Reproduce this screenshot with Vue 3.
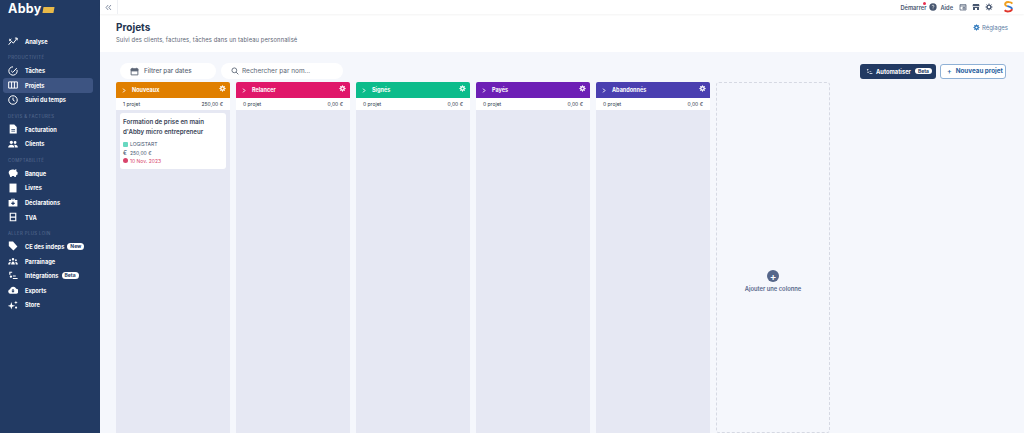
<script setup>
const groups = [
  { label: '', items: [{ t: 'Analyse', i: 'chart' }] },
  { label: 'PRODUCTIVITÉ', items: [{ t: 'Tâches', i: 'check' }, { t: 'Projets', i: 'board', active: true }, { t: 'Suivi du temps', i: 'clock' }] },
  { label: 'DEVIS & FACTURES', items: [{ t: 'Facturation', i: 'doc' }, { t: 'Clients', i: 'people' }] },
  { label: 'COMPTABILITÉ', items: [{ t: 'Banque', i: 'piggy' }, { t: 'Livres', i: 'book' }, { t: 'Déclarations', i: 'case' }, { t: 'TVA', i: 'tva' }] },
  { label: 'ALLER PLUS LOIN', items: [{ t: 'CE des indeps', i: 'tag', badge: 'New' }, { t: 'Parrainage', i: 'group' }, { t: 'Intégrations', i: 'plug', badge: 'Beta' }, { t: 'Exports', i: 'cloud' }, { t: 'Store', i: 'spark' }] }
]
const icons = {
  chart: 'M.8 10.500 4 6.500l2.500 2L11 2.500M8.300 2.500H11V5.200M1.300 3.500 4 6M4 3.500 1.300 6',
  check: 'M6 1a5 5 0 1 0 4.800 3.600M3.800 5.800 5.700 7.700 10.500 2.500',
  board: 'M.8 2.300h10.400v7.400H.8zM4.300 2.300v7.400M7.700 2.300v7.400',
  clock: 'M6 .9a5.100 5.100 0 1 0 0 10.200A5.100 5.100 0 0 0 6 .9zM6 3.200V6l2 1.300'
}
const filled = {
  doc: 'M2 .5H7.500L10.500 3.500V11.500H2zM4 6h4.500V7H4zM4 8h4.500V9H4z',
  people: 'M4 2a2 2 0 1 1 0 4 2 2 0 0 1 0-4zM8.500 2.500a1.700 1.700 0 1 1 0 3.400 1.700 1.700 0 0 1 0-3.400zM.2 10.300c0-2.300 1.600-3.500 3.800-3.500s3.800 1.200 3.800 3.500zM8.500 10.300c0-1.300-.3-2.300-1-3.200 2.500-.4 4.300.8 4.300 3.200z',
  piggy: 'M.8 5.500C.8 3 3.300 1.800 5.500 1.800c1 0 1.600.2 2.200.5L10 1.300v2.500l1.500 1.300v2.700L10 8.500 9.300 10.800H7.500V9.500h-3v1.300H2.700L2 8.500C1.200 7.700.8 6.500.8 5.500z',
  book: 'M1.800.7h8.400v10.600H1.800z',
  case: 'M.7 3.700h3.200V2h4.200v1.700h3.200v7.600H.7zM5 3v.7h2V3zM5.300 5.500h1.400v1.400h1.400v1.400H6.700v1.400H5.300V8.300H3.900V6.900h1.400z',
  tag: 'M1 .7H6l5.300 5.800L6.500 11.500 1 6z',
  group: 'M6 2.500a1.500 1.500 0 1 1 0 3 1.500 1.500 0 0 1 0-3zM2.500 4a1.100 1.100 0 1 1 0 2.200 1.100 1.100 0 0 1 0-2.200zM9.500 4a1.100 1.100 0 1 1 0 2.200 1.100 1.100 0 0 1 0-2.200zM3.800 10.300c0-2.200 1-3.800 2.200-3.800S8.200 8.100 8.200 10.300zM.2 10.300c0-1.700.9-3 2.300-3 .3 0 .5 0 .7.200-.3.800-.5 1.700-.5 2.800zM11.800 10.300c0-1.700-.9-3-2.300-3-.3 0-.5 0-.7.200.3.800.5 1.700.5 2.800z',
  plug: 'M1.500 1h3.500v1.200H2.900v2.300H1.500zM3.500 5.300a1.400 1.400 0 1 1 0 2.800 1.400 1.400 0 0 1 0-2.800zM5.800 8.300h5.700v1.400H5.800zM5.800 5.300h3.500v1.400H5.800z',
  cloud: 'M2.900 10.500A2.800 2.800 0 0 1 2.400 5 3.900 3.900 0 0 1 9.800 4.500 3 3 0 0 1 9.200 10.500zM5.300 4.800v2.200H4L6 9.300 8 7H6.700V4.800z',
  spark: 'M4 2.500l1.100 3.400 3.400 1.100-3.400 1.100L4 11.500 2.900 8.100-.5 7l3.400-1.100zM9.500 .8l.6 1.600 1.600.6-1.600.6-.6 1.600L8.900 3.600 7.300 3l1.600-.6zM9.700 7.800a1.300 1.300 0 1 1 0 2.600 1.300 1.300 0 0 1 0-2.600z'
}
const columns = [
  { name: 'Nouveaux', color: '#e07f00', count: '1 projet', total: '250,00 €', card: true },
  { name: 'Relancer', color: '#e0176a', count: '0 projet', total: '0,00 €' },
  { name: 'Signés', color: '#0cbc8b', count: '0 projet', total: '0,00 €' },
  { name: 'Payés', color: '#6d1fb5', count: '0 projet', total: '0,00 €' },
  { name: 'Abandonnés', color: '#4a3fb0', count: '0 projet', total: '0,00 €' }
]
</script>

<template>
  <div class="app">
    <aside class="side">
      <div class="logo">Abby<span class="pro">PRO</span></div>
      <div v-for="g in groups" :key="g.label" class="group">
        <div v-if="g.label" class="glabel">{{ g.label }}</div>
        <div v-for="it in g.items" :key="it.t" class="item" :class="{ active: it.active }">
          <svg class="ic" viewBox="0 0 12 12">
            <path v-if="icons[it.i]" :d="icons[it.i]" fill="none" stroke="#fff" stroke-width="1.200" />
            <path v-else-if="filled[it.i]" :d="filled[it.i]" fill="#fff" fill-rule="evenodd" />
            <template v-else>
              <path d="M2 .8h8v10.400H2zM3.400 2.200v3.300h5.200V2.200zM3.400 7v2.800h5.200V7z" fill="#fff" fill-rule="evenodd" />
            </template>
          </svg>
          <span>{{ it.t }}</span>
          <span v-if="it.badge" class="badge">{{ it.badge }}</span>
        </div>
      </div>
    </aside>

    <main class="main">
      <div class="topbar">
        <div class="collapse">
          <svg viewBox="0 0 10 10" width="7" height="7"><path d="M4.500 1.500 1.500 5l3 3.500M8.500 1.500 5.500 5l3 3.500" fill="none" stroke="#5d6b85" stroke-width="1.100" /></svg>
        </div>
        <div class="tools">
          <span class="start">Démarrer<i class="dot"></i></span>
          <svg class="t" viewBox="0 0 12 12"><circle cx="6" cy="6" r="5.500" fill="#47566f" /><path d="M4.500 4.700c0-2 3-2 3 0 0 1.200-1.500 1.200-1.500 2.400M6 8.300v1" fill="none" stroke="#fff" stroke-width="1" /></svg>
          <span class="aide">Aide</span>
          <svg class="t" viewBox="0 0 12 12"><path d="M1.500 2.500h9v8h-9zM1.500 4.500h9M6 6.500h3v2.500H6z" fill="none" stroke="#47566f" stroke-width="1.100" /></svg>
          <svg class="t" viewBox="0 0 12 12"><path d="M1.500 1.500h9l.8 3.500H.7zM1.500 6h9v4.500H7.500V7.500h-3v3h-3z" fill="#47566f" /></svg>
          <svg class="t" viewBox="0 0 12 12"><circle cx="6" cy="6" r="2.900" fill="none" stroke="#47566f" stroke-width="2" /><path d="M6 .8v2M6 9.200v2M.8 6h2M9.200 6h2M2.300 2.300l1.400 1.400M8.300 8.300l1.400 1.400M9.700 2.300 8.300 3.700M3.700 8.300 2.300 9.700" stroke="#47566f" stroke-width="1.500" /></svg>
          <svg class="s" viewBox="0 0 12 14"><path d="M10.500 3C9 1 4 .5 2.500 2.500c-1 1.500 0 3 2 3.500" fill="none" stroke="#f0a020" stroke-width="2.200" /><path d="M4.500 6c2.500.5 5.500 1 5.500 3.500" fill="none" stroke="#2f74d0" stroke-width="2.200" /><path d="M10 9.500c-.3 3-6.500 3.500-8.500 1.300" fill="none" stroke="#e0352b" stroke-width="2.200" /></svg>
        </div>
      </div>

      <header class="head">
        <div>
          <h1>Projets</h1>
          <p>Suivi des clients, factures, tâches dans un tableau personnalisé</p>
        </div>
        <a class="settings">
          <svg viewBox="0 0 12 12" width="7" height="7"><circle cx="6" cy="6" r="3" fill="none" stroke="#1f6fb8" stroke-width="2.200" /><path d="M6 .8v2M6 9.200v2M.8 6h2M9.200 6h2M2.300 2.300l1.400 1.400M8.300 8.300l1.400 1.400M9.700 2.300 8.300 3.700M3.700 8.300 2.300 9.700" stroke="#1f6fb8" stroke-width="1.500" /></svg>
          Réglages
        </a>
      </header>

      <section class="board">
        <div class="toolbar">
          <div class="pill date">
            <svg viewBox="0 0 12 12" width="9" height="9"><path d="M1.500 2.500h9v8h-9zM1.500 5h9" fill="none" stroke="#5c6675" stroke-width="1.200" /><path d="M3.500 1v2M8.500 1v2M1.500 2.500h9V5h-9z" stroke="#5c6675" fill="#5c6675" /></svg>
            Filtrer par dates
          </div>
          <div class="pill search">
            <svg viewBox="0 0 12 12" width="8" height="8"><circle cx="5" cy="5" r="3.600" fill="none" stroke="#5c6675" stroke-width="1.300" /><path d="M7.700 7.700 11 11" stroke="#5c6675" stroke-width="1.400" /></svg>
            Rechercher par nom...
          </div>
          <div class="spacer"></div>
          <button class="btn dark">
            <svg viewBox="0 0 12 12" width="7" height="7"><path d="M1.500 1.500h3v1H3.500v2h-1v-2h-1zM3.500 6a1.200 1.200 0 1 1 0 2.400A1.200 1.200 0 0 1 3.500 6zM6 8.500h5v1.200H6zM6 5.800h3V7H6z" fill="#fff" /></svg>
            Automatiser <span class="beta">Beta</span>
          </button>
          <button class="btn outline"><span class="plus">+</span> Nouveau projet</button>
        </div>

        <div class="cols">
          <div v-for="c in columns" :key="c.name" class="col">
            <div class="chead" :style="{ background: c.color }">
              <svg viewBox="0 0 6 8" width="4" height="5"><path d="M1.500 1 4.500 4l-3 3" fill="none" stroke="#fff" stroke-width="1.600" /></svg>
              <span class="cname">{{ c.name }}</span>
              <svg class="gear" viewBox="0 0 12 12" width="7" height="7"><circle cx="6" cy="6" r="3" fill="none" stroke="#fff" stroke-width="2.400" /><path d="M6 .5v2M6 9.500v2M.5 6h2M9.500 6h2M2.100 2.100l1.500 1.500M8.400 8.400l1.500 1.500M9.900 2.100 8.400 3.600M3.600 8.400 2.100 9.900" stroke="#fff" stroke-width="1.500" /></svg>
            </div>
            <div class="csub"><span>{{ c.count }}</span><span>{{ c.total }}</span></div>
            <div class="cbody">
              <article v-if="c.card" class="card">
                <h3>Formation de prise en main d'Abby micro entrepreneur</h3>
                <div class="line"><i class="sq"></i>LOGISTART</div>
                <div class="line"><span class="eur">€</span>250,00 €</div>
                <div class="line red"><i class="rd"></i>10 Nov. 2023</div>
              </article>
            </div>
          </div>
          <div class="add">
            <div class="addc">+</div>
            <div class="addt">Ajouter une colonne</div>
          </div>
        </div>
      </section>
    </main>
  </div>
</template>

<style scoped>
.app { display: flex; width: 1024px; height: 433px; overflow: hidden; font-family: Inter, "Noto Sans", sans-serif; background: #f5f7fc; }
.side { width: 100px; flex: none; background: #223a63; color: #fff; padding: 0 7px 0 3px; box-sizing: border-box; }
.logo { font-weight: 700; font-size: 12.500px; height: 34px; padding: 3px 0 0 5px; line-height: 12px; letter-spacing: .3px; box-sizing: border-box; }
.pro { display: inline-block; width: 11px; height: 6px; margin-left: 1px; background: #e9b949; color: #e9b949; font-size: 4px; line-height: 6px; overflow: hidden; font-style: italic; vertical-align: 0; transform: skewX(-10deg); }
.group { margin-bottom: 3.800px; }
.glabel { font-size: 4.300px; line-height: 5px; height: 5px; color: #5b6f93; letter-spacing: .4px; padding: 3px 0 3px 5px; }
.item { display: flex; align-items: center; height: 14.600px; font-size: 5.700px; font-weight: 700; border-radius: 3px; padding-left: 5px; white-space: nowrap; }
.item.active { background: #3d5482; }
.ic { width: 10px; height: 10px; margin-right: 7px; flex: none; }
.badge { background: #fff; color: #223a63; border-radius: 5px; font-size: 5px; padding: 0 3px; line-height: 7px; margin-left: 3px; }
.main { flex: 1; min-width: 0; display: flex; flex-direction: column; }
.topbar { height: 14px; background: #fff; display: flex; align-items: center; justify-content: space-between; box-shadow: 0 1px 2px #0000000d; position: relative; z-index: 1; }
.collapse { width: 18px; height: 14px; display: flex; align-items: center; justify-content: center; border-right: 1px solid #eef0f4; box-sizing: border-box; }
.tools { display: flex; align-items: center; padding-right: 10px; color: #47566f; font-size: 5.700px; font-weight: 600; }
.start { position: relative; margin-right: 3px; }
.dot { position: absolute; right: 0; top: -2px; width: 3px; height: 3px; border-radius: 50%; background: #e8304f; }
.t { width: 8px; height: 8px; margin-right: 5px; }
.aide { margin: 0 6px 0 -2px; }
.s { width: 11px; height: 12px; margin-left: 5px; }
.head { height: 38px; background: #fff; display: flex; justify-content: space-between; padding: 8px 16px 0 16px; box-sizing: border-box; }
h1 { margin: 0; font-size: 10px; line-height: 11px; font-weight: 700; color: #24344f; }
.head p { margin: 3px 0 0; font-size: 5.800px; line-height: 7px; color: #5d6675; letter-spacing: .12px; }
.settings { display: flex; align-items: center; gap: 2px; height: 9px; margin-top: 1px; font-size: 6px; color: #5b7ba3; }
.board { flex: 1; min-height: 0; background: #f5f7fc; padding: 11px 18px 0 16px; }
.toolbar { display: flex; align-items: center; height: 16px; }
.pill { height: 16px; background: #fff; border-radius: 8px; display: flex; align-items: center; font-size: 6.300px; color: #5c6675; box-sizing: border-box; }
.date { width: 96px; margin-left: 4px; padding-left: 10px; gap: 5px; font-weight: 500; }
.search { width: 122px; margin-left: 5px; padding-left: 10px; gap: 3px; font-size: 6.500px; }
.spacer { flex: 1; }
.btn { font-family: inherit; height: 15px; border-radius: 3px; font-size: 5.800px; font-weight: 700; display: flex; align-items: center; padding: 0; box-sizing: border-box; }
.dark { width: 76px; background: #223a63; color: #fff; border: 0; padding-left: 6px; gap: 3px; }
.beta { background: #fff; color: #223a63; border-radius: 4px; padding: 0 3px; line-height: 6px; font-size: 5px; margin-left: 1px; }
.outline { width: 66px; margin-left: 4px; background: #fff; border: 1px solid #8fb1d6; color: #1f5e9e; padding-left: 6px; gap: 4px; font-size: 6.300px; }
.plus { font-size: 7px; font-weight: 500; }
.cols { display: flex; gap: 6px; margin-top: 3px; height: 351px; }
.col { width: 114px; flex: none; display: flex; flex-direction: column; }
.chead { height: 16px; border-radius: 2px 2px 0 0; display: flex; align-items: center; color: #fff; padding: 0 4px 0 6px; position: relative; }
.cname { font-size: 5.500px; font-weight: 700; margin-left: 6px; }
.gear { position: absolute; right: 4px; top: 3px; }
.csub { height: 12px; background: #fff; display: flex; align-items: center; justify-content: space-between; padding: 0 7px; font-size: 5px; color: #2f3a4c; }
.cbody { flex: 1; background: #e6e8f3; padding: 3px 4px 0; }
.card { background: #fff; border-radius: 3px; height: 56px; padding: 4px 3px 0; box-sizing: border-box; }
h3 { margin: 0 0 4px; font-size: 6.200px; line-height: 10px; font-weight: 600; color: #3a4557; }
.line { display: flex; align-items: center; height: 8.400px; font-size: 5px; color: #47566f; gap: 2px; }
.line:first-of-type { margin-top: -1px; }
.sq { width: 5px; height: 5px; background: #68d8c0; border-radius: 1px; }
.eur { width: 5px; font-size: 6px; }
.red { color: #d8446b; }
.rd { width: 5px; height: 5px; border-radius: 50%; background: #d8446b; }
.add { width: 114px; flex: none; border: 1px dashed #d6d9e3; border-radius: 3px; box-sizing: border-box; display: flex; flex-direction: column; align-items: center; padding-top: 187px; }
.addc { width: 12px; height: 12px; border-radius: 50%; background: #55668a; color: #fff; font-size: 10px; line-height: 12px; text-align: center; font-weight: 600; }
.addt { margin-top: 3px; font-size: 5.800px; font-weight: 600; color: #55668a; line-height: 7px; }
</style>
